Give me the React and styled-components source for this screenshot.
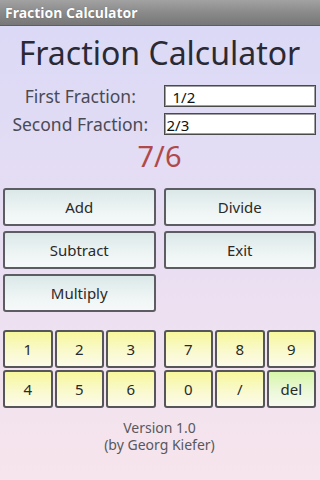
import React from "react";
import styled, { createGlobalStyle } from "styled-components";

const Global = createGlobalStyle`
  html, body { margin: 0; padding: 0; }
  body { font-family: "Noto Sans", "Open Sans", sans-serif; }
  * { box-sizing: border-box; }
`;

const Screen = styled.div`
  width: 320px;
  height: 480px;
  display: flex;
  flex-direction: column;
  background: linear-gradient(180deg, #d9d9f6 0%, #e8def3 50%, #f7e5ec 100%);
  overflow: hidden;
`;

const TitleBar = styled.div`
  height: 26px;
  flex: none;
  display: flex;
  align-items: center;
  padding-left: 5px;
  background: linear-gradient(180deg, #a2a2a2 0%, #8a8a8a 50%, #777 100%);
  border-bottom: 1px solid #5e5e5e;
  color: #fff;
  font-weight: bold;
  font-size: 14px;
  text-shadow: 0 0 1px rgba(0, 0, 0, 0.4);
`;

const Content = styled.div`
  display: flex;
  flex-direction: column;
  padding: 0 4px 0 3px;
`;

const Heading = styled.h1`
  margin: 7px 0 0;
  font-weight: normal;
  font-size: 32px;
  line-height: 40px;
  text-align: center;
  color: #2a2a36;
`;

const FormGrid = styled.div`
  margin-top: 12px;
  display: grid;
  grid-template-columns: 1fr 1fr;
  column-gap: 8px;
  row-gap: 6px;
`;

const Label = styled.label`
  font-size: 17.5px;
  line-height: 22px;
  text-align: center;
  color: #4a4a55;
  margin-left: 2px;
`;

const Input = styled.input`
  height: 22px;
  border: 1px solid #4a4a4a;
  box-shadow: inset 0 0 0 1px #a0a0a0;
  background: #fff;
  font-family: "Noto Sans", "Open Sans", sans-serif;
  font-size: 15px;
  color: #111;
  padding: 1px 0 0 ${(p) => p.$indent}px;
  outline: none;
  width: 100%;
`;

const Result = styled.div`
  margin-top: 4px;
  font-size: 29px;
  line-height: 34px;
  text-align: center;
  color: #b04a4a;
`;

const ButtonGrid = styled.div`
  margin-top: 15px;
  display: grid;
  grid-template-columns: 1fr 1fr;
  column-gap: 8px;
  row-gap: 5px;
`;

const Button = styled.button`
  height: 38px;
  border: 2px solid #5c5c62;
  border-radius: 3px;
  background: linear-gradient(180deg, #dbe8e8 0%, #eef4f4 60%, #f6f9f9 100%);
  font-family: "Noto Sans", "Open Sans", sans-serif;
  font-size: 15px;
  color: #2a2a2a;
  padding: 0;
`;

const Keypad = styled.div`
  margin-top: 18px;
  display: grid;
  grid-template-columns: 1fr 1fr;
  column-gap: 8px;
`;

const KeyGroup = styled.div`
  display: grid;
  grid-template-columns: repeat(3, 1fr);
  gap: 2px;
`;

const Key = styled.button`
  height: 38px;
  border: 2px solid #55555a;
  border-radius: 3px;
  background: ${(p) =>
    p.$green
      ? "linear-gradient(180deg, #d6f6a8 0%, #ebf8d8 55%, #f7fbef 100%)"
      : "linear-gradient(180deg, #f7f79c 0%, #f9f9c8 50%, #fcfbea 100%)"};
  font-family: "Noto Sans", "Open Sans", sans-serif;
  font-size: 15px;
  color: #2a2a2a;
  padding: 0;
`;

const Footer = styled.div`
  margin-top: 11px;
  display: flex;
  flex-direction: column;
  align-items: center;
  font-size: 14px;
  line-height: 17px;
  color: #58585e;
`;

const FooterLine = styled.div``;

export default function App() {
  return (
    <Screen>
      <Global />
      <TitleBar>Fraction Calculator</TitleBar>
      <Content>
        <Heading>Fraction Calculator</Heading>
        <FormGrid>
          <Label>First Fraction:</Label>
          <Input $indent={8} defaultValue="1/2" />
          <Label>Second Fraction:</Label>
          <Input $indent={2} defaultValue="2/3" />
        </FormGrid>
        <Result>7/6</Result>
        <ButtonGrid>
          <Button>Add</Button>
          <Button>Divide</Button>
          <Button>Subtract</Button>
          <Button>Exit</Button>
          <Button>Multiply</Button>
        </ButtonGrid>
        <Keypad>
          <KeyGroup>
            {["1", "2", "3", "4", "5", "6"].map((k) => (
              <Key key={k}>{k}</Key>
            ))}
          </KeyGroup>
          <KeyGroup>
            {["7", "8", "9", "0", "/"].map((k) => (
              <Key key={k}>{k}</Key>
            ))}
            <Key $green>del</Key>
          </KeyGroup>
        </Keypad>
        <Footer>
          <FooterLine>Version 1.0</FooterLine>
          <FooterLine>(by Georg Kiefer)</FooterLine>
        </Footer>
      </Content>
    </Screen>
  );
}
